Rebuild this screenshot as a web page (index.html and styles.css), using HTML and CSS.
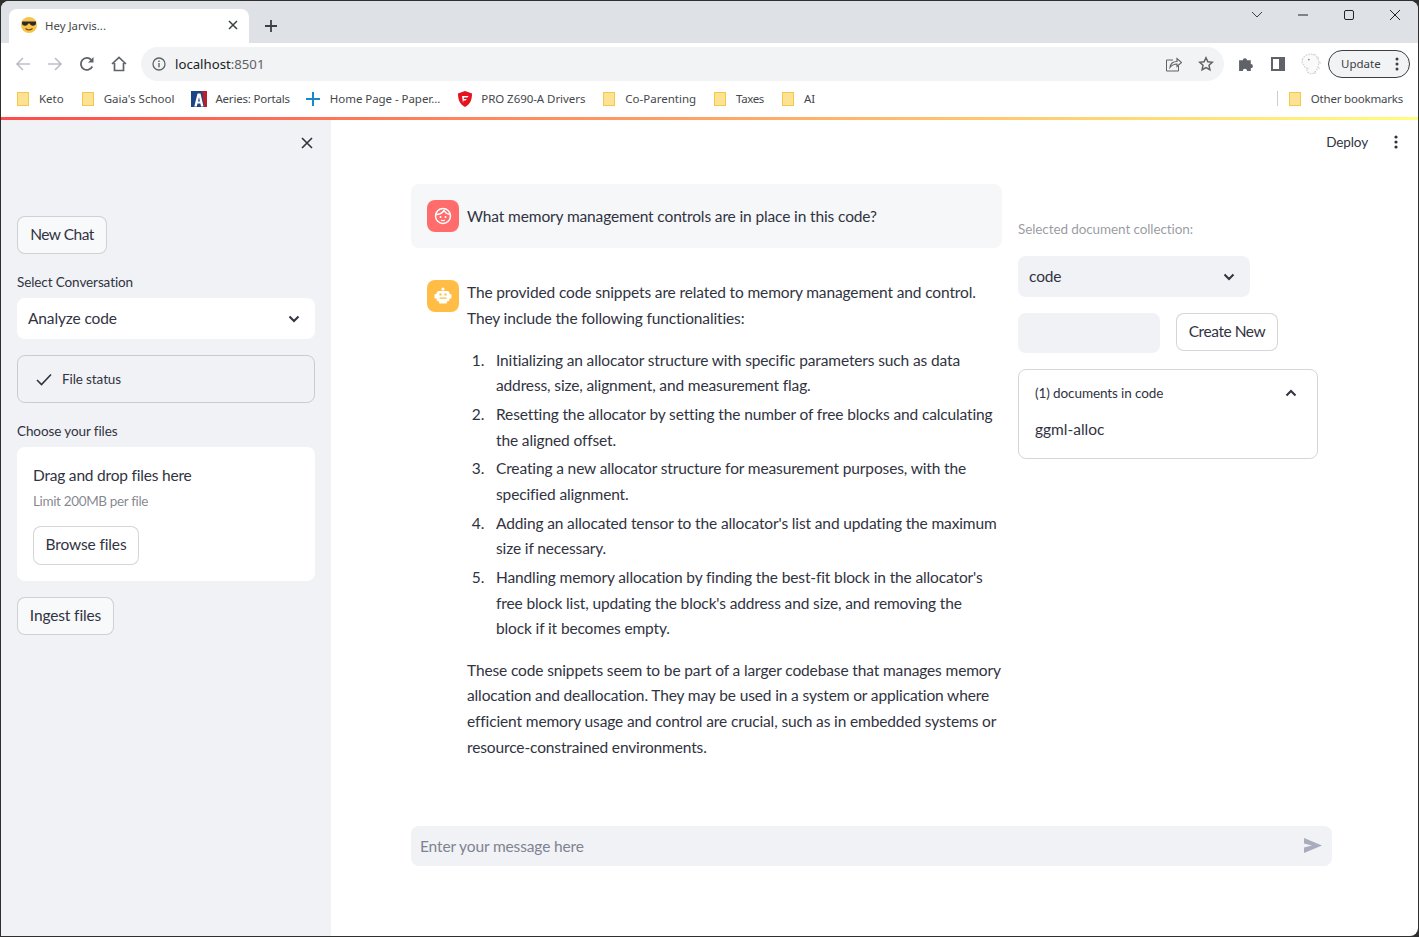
FILE: index.html
```html
<!DOCTYPE html>
<html>
<head>
  <title>Hey Jarvis...</title>
  <link rel="stylesheet" href="styles.css">
</head>
<body>
  <div class="window">
    <!-- browser tabs -->
    <div class="tabstrip">
      <div class="tab">
        <svg class="fav" viewBox="0 0 16 16" width="16" height="16"><circle cx="8" cy="8" r="8" fill="#f7c34a"/><path d="M1 4.500h14v1.500c0 1.800-1.200 2.800-3 2.800S9 7.600 8.700 6.500h-1.400C7 7.600 5.800 8.800 4 8.800S1 7.800 1 6z" fill="#2b2b2b"/><path d="M4.500 11.500c2 1.600 5 1.600 7 0" stroke="#7a4a10" stroke-width="1.200" fill="none"/></svg>
        <span class="tab-title">Hey Jarvis...</span>
        <svg class="tab-x" viewBox="0 0 10 10" width="10" height="10"><path d="M1 1l8 8M9 1l-8 8" stroke="#3c4043" stroke-width="1.500"/></svg>
      </div>
      <svg class="tab-new" viewBox="0 0 12 12" width="12" height="12"><path d="M6 0v12M0 6h12" stroke="#3c4043" stroke-width="1.800"/></svg>
      <div class="win-controls">
        <svg viewBox="0 0 12 8" width="12" height="8"><path d="M1 1l5 5 5-5" stroke="#3c4043" stroke-width="1" fill="none"/></svg>
        <svg viewBox="0 0 12 12" width="12" height="12"><path d="M1 6h10" stroke="#222" stroke-width="1"/></svg>
        <svg viewBox="0 0 12 12" width="12" height="12"><rect x="1.500" y="1.500" width="9" height="9" rx="1.500" stroke="#222" fill="none"/></svg>
        <svg viewBox="0 0 12 12" width="12" height="12"><path d="M1 1l10 10M11 1L1 11" stroke="#222" stroke-width="1"/></svg>
      </div>
    </div>

    <!-- address bar -->
    <div class="toolbar">
      <svg class="nav-btn" viewBox="0 0 16 16" width="16" height="16"><path d="M15 8H2M8 2L2 8l6 6" stroke="#bdc1c6" stroke-width="1.700" fill="none"/></svg>
      <svg class="nav-btn" viewBox="0 0 16 16" width="16" height="16"><path d="M1 8h13M8 2l6 6-6 6" stroke="#bdc1c6" stroke-width="1.700" fill="none"/></svg>
      <svg class="nav-btn" viewBox="0 0 16 16" width="16" height="16"><path d="M13.300 10.500A6 6 0 1 1 12.300 3.800" stroke="#5f6368" stroke-width="1.800" fill="none"/><path d="M14.500 1v5.500H9z" fill="#5f6368"/></svg>
      <svg class="nav-btn" viewBox="0 0 16 16" width="16" height="16"><path d="M1 8l7-6.500L15 8M3.500 7v7.500h9V7" stroke="#5f6368" stroke-width="1.700" fill="none"/></svg>
      <div class="omnibox">
        <svg viewBox="0 0 14 14" width="14" height="14"><circle cx="7" cy="7" r="6" stroke="#5f6368" stroke-width="1.300" fill="none"/><path d="M7 6v4.200M7 3.500v1.400" stroke="#5f6368" stroke-width="1.400"/></svg>
        <span class="url">localhost<span class="url-port">:8501</span></span>
        <svg class="omni-share" viewBox="0 0 16 16" width="16" height="16"><path d="M7 4H.500v11h12v-5" stroke="#5f6368" stroke-width="1" fill="none"/><path d="M4 11.500c.5-4 3.500-6 7-6V2.500L15.500 6.500 11 10.500V8c-3 0-5 1-7 3.500z" stroke="#5f6368" stroke-width="1.100" fill="#f1f3f4"/></svg>
        <svg viewBox="0 0 16 16" width="16" height="16"><path d="M8 1.800l1.900 4 4.400.5-3.300 3 .9 4.400L8 11.500l-3.900 2.200.9-4.400-3.300-3 4.400-.5z" stroke="#5f6368" stroke-width="1.500" fill="none"/></svg>
      </div>
      <svg class="ext" viewBox="0 1 15 15" width="16" height="16"><path d="M1 5h3.500a2 2 0 1 1 4 0H12v3.500a2 2 0 1 1 0 4V15H8.500a2 2 0 1 0-4 0H1z" fill="#5f6368"/></svg>
      <svg class="ext" viewBox="0 0 14 14" width="14" height="14"><rect x="1" y="1" width="12" height="12" fill="#fff" stroke="#5f6368" stroke-width="2"/><rect x="8" y="1" width="5" height="12" fill="#5f6368"/></svg>
      <svg class="avatar-dino" viewBox="1 1 20 20" width="22" height="22"><path d="M4 7c1-3 4-5 8-5s7 3 7 7c0 5-2 9-6 11-2 0-4-1-5-3l1-2c-2 0-3-1-3-3-1 0-3-2-2-5z" fill="#fafafa" stroke="#cfcfcf" stroke-dasharray="1.500 1"/><path d="M14 3l2-1M17 6l2-1M19 10l2 0M18 14l2 1M15 18l1 2" stroke="#d8d8d8"/><circle cx="10" cy="7" r=".8" fill="#888"/></svg>
      <div class="update-btn"><span>Update</span><svg viewBox="0 0 4 14" width="4" height="14"><circle cx="2" cy="2" r="1.500" fill="#3c4043"/><circle cx="2" cy="7" r="1.500" fill="#3c4043"/><circle cx="2" cy="12" r="1.500" fill="#3c4043"/></svg></div>
    </div>

    <!-- bookmarks -->
    <div class="bookmarks">
      <div class="bm"><i class="folder"></i><span>Keto</span></div>
      <div class="bm"><i class="folder"></i><span>Gaia's School</span></div>
      <div class="bm bm-aeries">
        <svg viewBox="0 0 16 16" width="16" height="16"><rect width="16" height="16" fill="#1c4587"/><path d="M11 0h5v16h-3z" fill="#b5202c"/><path d="M6.500 2.500h3l3 13h-2.500l-.6-3H6.500l-.7 3H3.300zM7 10.500h1.900L8 6z" fill="#fff"/></svg>
        <span>Aeries: Portals</span>
      </div>
      <div class="bm bm-home">
        <svg viewBox="0 0 16 16" width="16" height="16"><path d="M8 1v14M1 8h14" stroke="#1a87c9" stroke-width="2"/></svg>
        <span>Home Page - Paper...</span>
      </div>
      <div class="bm bm-msi">
        <svg viewBox="0 0 14 16" width="14" height="16"><path d="M7 0l7 2.500c0 6-1.500 10.500-7 13.500C1.500 13 0 8.500 0 2.500z" fill="#e3131f"/><path d="M4 5h6.500l-1 1.500H6l-.3 1.500h3l-1 1.500H5.500L5 12z" fill="#fff"/></svg>
        <span>PRO Z690-A Drivers</span>
      </div>
      <div class="bm"><i class="folder"></i><span>Co-Parenting</span></div>
      <div class="bm bm-taxes"><i class="folder"></i><span>Taxes</span></div>
      <div class="bm"><i class="folder"></i><span>AI</span></div>
      <div class="bm-end">
        <div class="bm"><i class="folder"></i><span>Other bookmarks</span></div>
      </div>
    </div>
    <div class="decoration"></div>

    <!-- streamlit app -->
    <div class="app">
      <aside class="sidebar">
        <div class="sidebar-head">
          <svg viewBox="0 0 12 12" width="12" height="12"><path d="M1 1l10 10M11 1L1 11" stroke="#31333f" stroke-width="1.600"/></svg>
        </div>
        <button class="btn btn-side btn-new">New Chat</button>
        <label class="field-label first-label">Select Conversation</label>
        <div class="select select-white">
          <span>Analyze code</span>
          <svg class="chev" viewBox="0 0 12 8" width="12" height="8"><path d="M1.500 1.500L6 6l4.500-4.500" stroke="#31333f" stroke-width="2" fill="none"/></svg>
        </div>
        <div class="status-box">
          <svg viewBox="0 0 16 13" width="16" height="13"><path d="M1 7l4.500 4.500L15 1.500" stroke="#31333f" stroke-width="1.600" fill="none"/></svg>
          <span>File status</span>
        </div>
        <label class="field-label">Choose your files</label>
        <div class="dropzone">
          <div class="drop-title">Drag and drop files here</div>
          <div class="drop-limit">Limit 200MB per file</div>
          <button class="btn btn-white btn-browse">Browse files</button>
        </div>
        <button class="btn btn-side ingest">Ingest files</button>
      </aside>

      <main class="main">
        <div class="main-head">
          <span class="deploy">Deploy</span>
          <svg viewBox="0 0 4 14" width="4" height="14"><circle cx="2" cy="2" r="1.600" fill="#31333f"/><circle cx="2" cy="7" r="1.600" fill="#31333f"/><circle cx="2" cy="12" r="1.600" fill="#31333f"/></svg>
        </div>
        <div class="content">
          <div class="chat">
            <div class="msg msg-user">
              <div class="avatar avatar-user">
                <svg viewBox="0 0 20 20" width="20" height="20"><circle cx="10" cy="10" r="7.500" stroke="#fff" stroke-width="1.500" fill="none"/><path d="M3 8.500c3 0 6-1 8-4 1 2 3 3.500 6 4" stroke="#fff" stroke-width="1.400" fill="none"/><circle cx="7.500" cy="11" r="1" fill="#fff"/><circle cx="12.500" cy="11" r="1" fill="#fff"/><path d="M8 14c1.200.8 2.800.8 4 0" stroke="#fff" stroke-width="1.100" fill="none"/></svg>
              </div>
              <div class="msg-text"><p>What memory management controls are in place in this code?</p></div>
            </div>
            <div class="msg">
              <div class="avatar avatar-bot">
                <svg viewBox="0 0 20 20" width="20" height="20"><circle cx="10" cy="3" r="1.600" fill="#fff"/><rect x="3.500" y="5" width="13" height="10.500" rx="2.500" fill="#fff"/><rect x="1.500" y="8" width="3" height="4.500" rx="1" fill="#fff"/><rect x="15.500" y="8" width="3" height="4.500" rx="1" fill="#fff"/><rect x="6" y="15" width="8" height="2.500" rx="1" fill="#fff"/><rect x="6.500" y="7.500" width="2" height="2" fill="#ffbd45"/><rect x="11.500" y="7.500" width="2" height="2" fill="#ffbd45"/><rect x="6.500" y="11.500" width="7" height="1.300" fill="#ffbd45"/></svg>
              </div>
              <div class="msg-text">
                <p>The provided code snippets are related to memory management and control. They include the following functionalities:</p>
                <ol>
                  <li>Initializing an allocator structure with specific parameters such as data address, size, alignment, and measurement flag.</li>
                  <li>Resetting the allocator by setting the number of free blocks and calculating the aligned offset.</li>
                  <li>Creating a new allocator structure for measurement purposes, with the specified alignment.</li>
                  <li>Adding an allocated tensor to the allocator's list and updating the maximum size if necessary.</li>
                  <li>Handling memory allocation by finding the best-fit block in the allocator's free block list, updating the block's address and size, and removing the block if it becomes empty.</li>
                </ol>
                <p>These code snippets seem to be part of a larger codebase that manages memory allocation and deallocation. They may be used in a system or application where efficient memory usage and control are crucial, such as in embedded systems or resource-constrained environments.</p>
              </div>
            </div>
          </div>

          <div class="side">
            <label class="field-label muted">Selected document collection:</label>
            <div class="select select-grey">
              <span>code</span>
              <svg class="chev" viewBox="0 0 12 8" width="12" height="8"><path d="M1.500 1.500L6 6l4.500-4.500" stroke="#31333f" stroke-width="2" fill="none"/></svg>
            </div>
            <div class="create-row">
              <div class="text-input"></div>
              <button class="btn btn-white btn-create">Create New</button>
            </div>
            <div class="expander">
              <div class="expander-head">
                <span>(1) documents in code</span>
                <svg viewBox="0 0 12 8" width="12" height="8"><path d="M1.500 6.500L6 2l4.500 4.500" stroke="#31333f" stroke-width="2" fill="none"/></svg>
              </div>
              <div class="expander-body">ggml-alloc</div>
            </div>
          </div>
        </div>

        <div class="chat-input">
          <span>Enter your message here</span>
          <svg viewBox="0 0 18 15" width="18" height="15"><path d="M0 0l18 7.500L0 15l0-5.500 8-2-8-2z" fill="#a9acbd"/></svg>
        </div>
      </main>
    </div>
  </div>
</body>
</html>
```

FILE: styles.css
```css
html, body {
  margin: 0;
  height: 100%;
  background-color: #2f2f2f;
}

body {
  font-family: 'Lato', 'Noto Sans', sans-serif;
  color: #31333f;
  overflow: hidden;
}

.window {
  height: 935px;
  margin: 1px 1px 0 1px;
  border-radius: 8px 8px 8px 0;
  overflow: hidden;
  background-color: #fff;
  display: flex;
  flex-direction: column;
}

/* browser chrome */
.tabstrip {
  height: 42px;
  flex: none;
  background-color: #dee1e6;
  display: flex;
  align-items: flex-end;
  padding-left: 8px;
  box-sizing: border-box;
}

.tab {
  width: 240px;
  height: 34px;
  background-color: #fff;
  border-radius: 8px 8px 0 0;
  display: flex;
  align-items: center;
  padding: 0 11px 2px 12px;
  box-sizing: border-box;
  font-family: 'Noto Sans', sans-serif;
  font-size: 11.4px;
  color: #45484c;
}

.tab-title {
  margin-left: 8px;
  flex: 1;
}

.tab-new {
  margin: 0 0 11px 16px;
}

.win-controls {
  margin-left: auto;
  align-self: flex-start;
  display: flex;
  align-items: center;
  gap: 34px;
  height: 28px;
  padding-right: 17px;
}

.toolbar {
  height: 41px;
  flex: none;
  display: flex;
  align-items: center;
  padding-left: 14px;
  box-sizing: border-box;
}

.nav-btn {
  margin-right: 16px;
}

.omnibox {
  width: 1083px;
  height: 34px;
  margin-left: -2px;
  border-radius: 17px;
  background-color: #f1f3f4;
  display: flex;
  align-items: center;
  padding: 0 10px 0 11px;
  box-sizing: border-box;
  gap: 9px;
}

.url {
  flex: 1;
  font-family: 'Noto Sans', sans-serif;
  font-size: 13.2px;
  color: #202124;
}

.url-port {
  color: #5f6368;
}

.omni-share {
  margin-right: 7px;
}

.ext {
  margin-left: 14px;
}

.ext + .ext {
  margin-left: 17px;
}

.avatar-dino {
  margin-left: 14px;
}

.update-btn {
  width: 82px;
  height: 28px;
  margin-left: 7px;
  border: 1px solid #3c4043;
  border-radius: 14px;
  background-color: #f1f3f4;
  display: flex;
  align-items: center;
  justify-content: space-between;
  padding: 0 10px 0 12px;
  box-sizing: border-box;
  font-family: 'Noto Sans', sans-serif;
  font-size: 11.5px;
  color: #3c4043;
}

.bookmarks {
  height: 33px;
  flex: none;
  display: flex;
  align-items: center;
  padding: 0 15px 4px 16px;
  gap: 18px;
  box-sizing: border-box;
  font-family: 'Noto Sans', sans-serif;
  font-size: 11.5px;
  color: #45484c;
}

.bm {
  display: flex;
  align-items: center;
  gap: 10px;
}

.bm-aeries {
  gap: 8px;
  margin-left: -1px;
  letter-spacing: -0.2px;
}

.bm-home {
  gap: 9px;
  margin-left: -3px;
  letter-spacing: -0.05px;
}

.bm-msi {
  gap: 9px;
  letter-spacing: -0.06px;
}

.bm-taxes {
  letter-spacing: -0.4px;
}

.folder {
  display: block;
  width: 12px;
  height: 14px;
  box-sizing: border-box;
  background-color: #fde293;
  border: 1px solid #f2c94c;
}

.bm-end {
  margin-left: auto;
  border-left: 1px solid #ccc;
  padding-left: 11px;
  letter-spacing: -0.2px;
}

.decoration {
  height: 3px;
  flex: none;
  background-image: linear-gradient(90deg, #ff4b4b, #fffd80);
}

/* app */
.app {
  flex: 1;
  display: flex;
  min-height: 0;
}

.sidebar {
  width: 330px;
  flex: none;
  background-color: #f0f2f6;
  padding: 0 16px;
  box-sizing: border-box;
}

.sidebar-head {
  height: 96px;
  display: flex;
  justify-content: flex-end;
  padding: 17px 2px 0 0;
  box-sizing: border-box;
}

.btn {
  display: block;
  height: 38px;
  padding: 0 0 3px;
  border: 1px solid rgba(49, 51, 63, 0.2);
  border-radius: 8px;
  font-family: inherit;
  font-size: 15.5px;
  letter-spacing: -0.13px;
  color: #31333f;
}

.btn-side {
  background-color: #f8f9fb;
}

.btn-white {
  background-color: #fff;
}

.btn-new {
  width: 90px;
  letter-spacing: -0.5px;
}

.btn-browse {
  width: 106px;
  height: 39px;
}

.btn-create {
  width: 102px;
  letter-spacing: -0.45px;
}

.ingest {
  width: 97px;
  margin-top: 16px;
}

.field-label {
  display: block;
  font-size: 13.5px;
  letter-spacing: -0.1px;
  line-height: 20px;
  margin: 18px 0 6px;
}

.first-label {
  margin-top: 18px;
}

.muted {
  margin: 0 0 17px;
  color: rgba(49, 51, 63, 0.5);
}

.select {
  height: 41px;
  border-radius: 8px;
  display: flex;
  align-items: center;
  justify-content: space-between;
  padding: 0 15px 2px 11px;
  box-sizing: border-box;
  font-size: 15.5px;
  letter-spacing: -0.13px;
}

.select .chev {
  margin-top: 2px;
}

.select-white {
  background-color: #fff;
}

.select-grey {
  width: 232px;
  background-color: #f0f2f6;
}

.status-box {
  height: 48px;
  margin: 16px 0 18px;
  border: 1px solid rgba(49, 51, 63, 0.2);
  border-radius: 8px;
  display: flex;
  align-items: center;
  gap: 10px;
  padding-left: 18px;
  box-sizing: border-box;
  font-size: 13.5px;
  letter-spacing: -0.1px;
}

.dropzone {
  height: 134px;
  background-color: #fff;
  border-radius: 8px;
  padding: 16px;
  box-sizing: border-box;
}

.drop-title {
  font-size: 15.5px;
  letter-spacing: -0.2px;
  line-height: 25px;
}

.drop-limit {
  font-size: 13.5px;
  letter-spacing: -0.35px;
  line-height: 20px;
  margin: 3px 0 15px;
  color: rgba(49, 51, 63, 0.6);
}

.main {
  flex: 1;
  padding-left: 80px;
  box-sizing: border-box;
}

.main-head {
  height: 64px;
  display: flex;
  justify-content: flex-end;
  align-items: flex-start;
  gap: 26px;
  padding: 15px 20px 0 0;
  box-sizing: border-box;
  font-size: 13.5px;
  letter-spacing: -0.1px;
}

.deploy {
  line-height: 14px;
}

.content {
  display: flex;
  gap: 16px;
}

.chat {
  width: 591px;
  flex: none;
}

.msg {
  display: flex;
  gap: 8px;
  padding: 16px 0 16px 16px;
  border-radius: 8px;
  font-size: 15.5px;
  letter-spacing: -0.13px;
  line-height: 25.600px;
}

.msg-user {
  background-color: #f6f7f9;
  margin-bottom: 16px;
}

.avatar {
  width: 32px;
  height: 32px;
  flex: none;
  border-radius: 8px;
  display: flex;
  align-items: center;
  justify-content: center;
}

.avatar-user {
  background-color: #ff6c6c;
}

.avatar-bot {
  background-color: #ffbd45;
}

.msg-text {
  padding-top: 0.4px;
}

.msg-text p {
  margin: 0 0 16px;
}

.msg-text p:last-child {
  margin-bottom: 0;
}

.msg-user .msg-text {
  padding-top: 4px;
}

.msg-text ol {
  margin: 0 0 16px;
  padding: 0 3px 0 21px;
}

.msg-text li {
  padding-left: 8px;
  margin-bottom: 3.200px;
}

.side {
  width: 300px;
  flex: none;
  padding-top: 35px;
}

.create-row {
  display: flex;
  gap: 16px;
  margin: 16px 0;
}

.text-input {
  width: 142px;
  height: 40px;
  background-color: #f0f2f6;
  border-radius: 8px;
}

.expander {
  height: 90px;
  border: 1px solid rgba(49, 51, 63, 0.2);
  border-radius: 8px;
  padding: 0 16px;
  box-sizing: border-box;
}

.expander-head {
  display: flex;
  align-items: center;
  justify-content: space-between;
  height: 46px;
  padding-right: 4px;
  font-size: 13.5px;
  letter-spacing: -0.1px;
}

.expander-body {
  padding-top: 1px;
  font-size: 15.5px;
  line-height: 25px;
}

.chat-input {
  width: 921px;
  height: 40px;
  margin-top: 49.6px;
  background-color: #f0f2f6;
  border-radius: 8px;
  display: flex;
  align-items: center;
  justify-content: space-between;
  padding: 0 10px 0 9px;
  box-sizing: border-box;
  font-size: 15.5px;
  letter-spacing: -0.13px;
  color: #7f8290;
}
```
